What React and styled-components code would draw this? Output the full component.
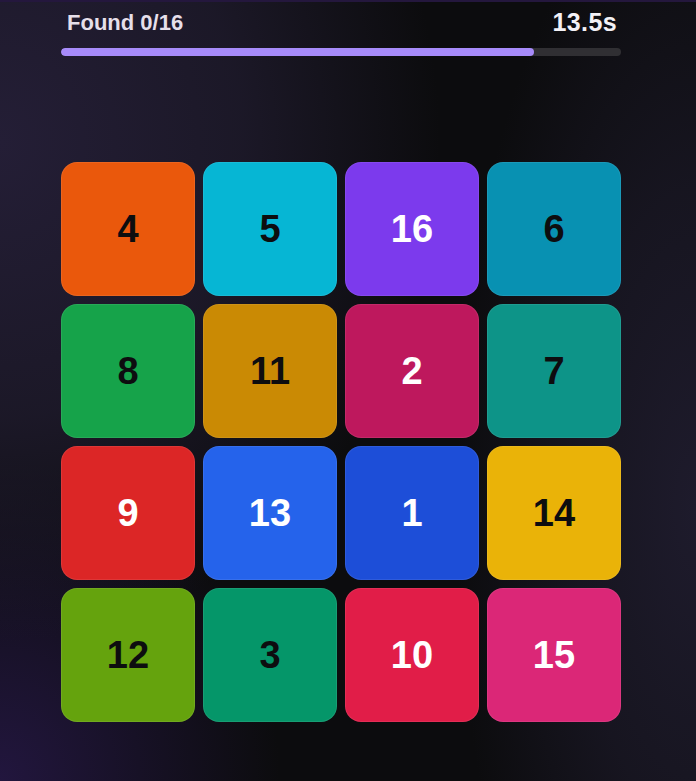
import React from "react";
import styled, { createGlobalStyle } from "styled-components";

const GlobalStyle = createGlobalStyle`
  html, body {
    margin: 0;
    padding: 0;
    background: #0c0c0e;
  }
  body {
    font-family: "Liberation Sans", Arial, sans-serif;
  }
`;

const Page = styled.div`
  min-height: 781px;
  box-sizing: border-box;
  padding: 6px 0 40px 61px;
  border-top: 2px solid #24173d;
  background:
    radial-gradient(ellipse 440px 500px at 0% 18%, rgba(36, 30, 54, 1), rgba(34, 29, 50, 0.7) 55%, transparent 100%),
    radial-gradient(ellipse 280px 320px at 0% 100%, rgba(34, 22, 62, 1), transparent 100%),
    radial-gradient(ellipse 240px 640px at 100% 65%, rgba(30, 27, 44, 1), rgba(30, 27, 44, 0.6) 50%, transparent 100%),
    #0c0c0e;
`;

const Board = styled.div`
  width: 560px;
  display: flex;
  flex-direction: column;
`;

const Header = styled.div`
  display: flex;
  justify-content: space-between;
  align-items: flex-end;
  padding: 0 4px 0 6px;
`;

const Found = styled.span`
  font-size: 22px;
  font-weight: bold;
  color: #e6dfea;
  line-height: 26px;
`;

const Timer = styled.span`
  font-size: 25px;
  font-weight: bold;
  color: #f3f1f6;
  letter-spacing: 0.4px;
  line-height: 28px;
`;

const Track = styled.div`
  margin-top: 12px;
  height: 8px;
  border-radius: 4px;
  background: #302f33;
  overflow: hidden;
`;

const Fill = styled.div`
  height: 100%;
  border-radius: 4px;
  background: #a78bfa;
`;

const Grid = styled.div`
  margin-top: 106px;
  display: grid;
  grid-template-columns: repeat(4, 134px);
  grid-auto-rows: 134px;
  gap: 8px;
`;

const Tile = styled.button`
  all: unset;
  box-sizing: border-box;
  display: flex;
  align-items: center;
  justify-content: center;
  border-radius: 16px;
  border: 1px solid rgba(255, 255, 255, 0.08);
  background: ${(p) => p.bg};
  color: ${(p) => (p.light ? "#ffffff" : "#0d0d0f")};
  font-family: "Liberation Sans", Arial, sans-serif;
  font-size: 38px;
  font-weight: bold;
  cursor: pointer;
`;

const tiles = [
  { n: 4, bg: "#ea580c" },
  { n: 5, bg: "#06b6d4" },
  { n: 16, bg: "#7c3aed", light: true },
  { n: 6, bg: "#0891b2" },
  { n: 8, bg: "#16a34a" },
  { n: 11, bg: "#ca8a04" },
  { n: 2, bg: "#be185d", light: true },
  { n: 7, bg: "#0d9488" },
  { n: 9, bg: "#dc2626", light: true },
  { n: 13, bg: "#2563eb", light: true },
  { n: 1, bg: "#1d4ed8", light: true },
  { n: 14, bg: "#eab308" },
  { n: 12, bg: "#65a30d" },
  { n: 3, bg: "#059669" },
  { n: 10, bg: "#e11d48", light: true },
  { n: 15, bg: "#db2777", light: true },
];

export default function App() {
  const time = 13.5;
  const total = 16;

  return (
    <>
      <GlobalStyle />
      <Page>
        <Board>
          <Header>
            <Found>Found 0/16</Found>
            <Timer>{time.toFixed(1)}s</Timer>
          </Header>
          <Track>
            <Fill style={{ width: `${(time / total) * 100}%` }} />
          </Track>
          <Grid>
            {tiles.map((t) => (
              <Tile key={t.n} bg={t.bg} light={t.light}>
                {t.n}
              </Tile>
            ))}
          </Grid>
        </Board>
      </Page>
    </>
  );
}
